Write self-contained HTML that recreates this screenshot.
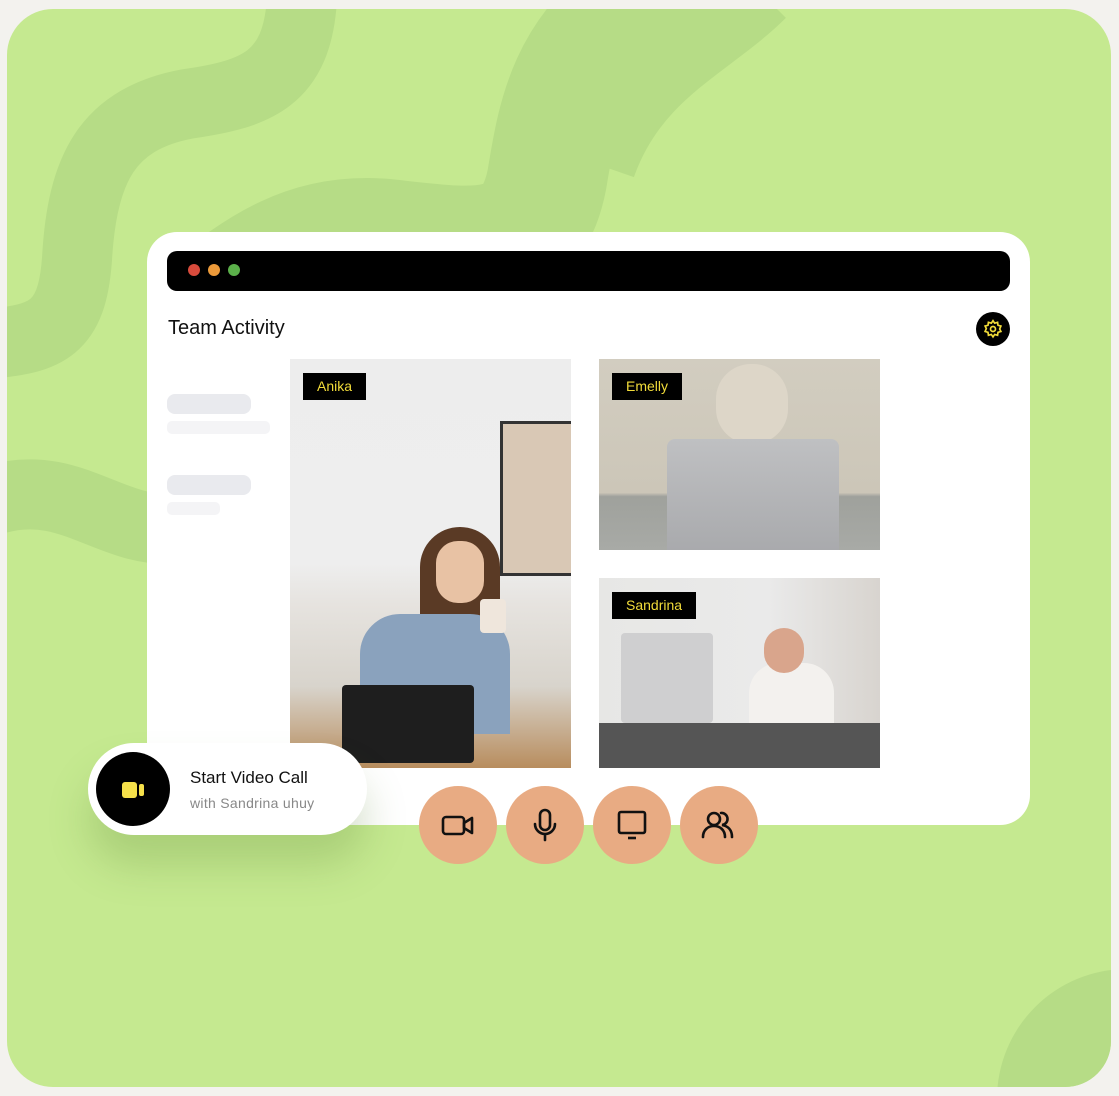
<!DOCTYPE html>
<html style="overflow:hidden"><head><style>
*{margin:0;padding:0;box-sizing:border-box}
html,body{width:1119px;height:1096px}
body{background:#f3f2ee;position:relative;overflow:hidden;font-family:"Liberation Sans",sans-serif}
.g{position:absolute;left:7px;top:9px;width:1104px;height:1078px;background:#c5e990;border-radius:46px;overflow:hidden}
.card{position:absolute;left:147px;top:232px;width:883px;height:593px;background:#fff;border-radius:30px}
.bar{position:absolute;left:167px;top:251px;width:843px;height:40px;background:#000;border-radius:10px}
.dot{position:absolute;top:264px;width:12px;height:12px;border-radius:50%}
.lbl{position:absolute;background:#000;color:#f2dc3a;font-size:14px;height:27px;line-height:27px;padding:0 14px}
.ph{position:absolute;overflow:hidden}
.sk{position:absolute;border-radius:8px}
.btn{position:absolute;top:786px;width:78px;height:78px;border-radius:50%;background:#e8ab83;display:flex;align-items:center;justify-content:center}
</style></head><body>
<div class="g">
<svg width="1104" height="1078" style="position:absolute;left:0;top:0">
<g fill="none" stroke="#b6dc86" stroke-linecap="butt">
<path d="M295,-10 C290,70 250,85 180,95 C100,110 75,160 70,250 C65,320 40,330 -20,335" stroke-width="70"/>
<path d="M640,-10 C560,40 550,110 540,170 C525,250 470,240 380,230 C300,222 250,260 200,300" stroke-width="120"/>
<path d="M740,-30 C690,20 610,50 575,150" stroke-width="110"/>
<path d="M-10,490 C60,470 100,520 160,520" stroke-width="70"/>
</g>
<circle cx="1120" cy="1090" r="130" fill="#b6dc86"/>
</svg>
</div>
<div class="card"></div>
<div class="bar"></div>
<div class="dot" style="left:188px;background:#d84b3c"></div>
<div class="dot" style="left:208px;background:#ec9a3a"></div>
<div class="dot" style="left:228px;background:#5bb04a"></div>
<div style="position:absolute;left:168px;top:317px;font-size:20px;color:#111">Team Activity</div>
<div style="position:absolute;left:976px;top:312px;width:34px;height:34px;border-radius:50%;background:#000;display:flex;align-items:center;justify-content:center">
<svg width="20" height="20" viewBox="0 0 24 24" fill="none" stroke="#f2dc3a" stroke-width="2"><circle cx="12" cy="12" r="3"/><path d="M12 2l2 3 3.5-1 .5 3.5 3.5 1-1.5 3.5 1.5 3-3.5 1-.5 3.5-3.5-1-2 3-2-3-3.5 1-.5-3.5-3.5-1 1.5-3.5L2.5 8.5 6 7.5 6.5 4 10 5z"/></svg></div>
<div class="sk" style="left:167px;top:394px;width:84px;height:20px;background:#e9eaee"></div>
<div class="sk" style="left:167px;top:421px;width:103px;height:13px;background:#f4f4f6;border-radius:5px"></div>
<div class="sk" style="left:167px;top:475px;width:84px;height:20px;background:#e9eaee"></div>
<div class="sk" style="left:167px;top:502px;width:53px;height:13px;background:#f4f4f6;border-radius:5px"></div>

<div class="ph" style="left:290px;top:359px;width:281px;height:409px;background:linear-gradient(#ededed 0%,#eeeeee 50%,#e6e3df 60%,#d8d4cc 80%,#b88d5e 100%)">
<div style="position:absolute;left:210px;top:62px;width:71px;height:155px;background:#d9c8b5;border:3px solid #333;border-right:none"></div>
<div style="position:absolute;left:130px;top:168px;width:80px;height:110px;border-radius:40px 40px 10px 10px;background:#5a3a25"></div>
<div style="position:absolute;left:146px;top:182px;width:48px;height:62px;border-radius:22px;background:#e8c2a4"></div>
<div style="position:absolute;left:70px;top:255px;width:150px;height:120px;border-radius:40px 40px 0 0;background:#8aa2bd"></div>
<div style="position:absolute;left:52px;top:326px;width:132px;height:78px;background:#1e1e1e;border-radius:4px"></div>
<div style="position:absolute;left:190px;top:240px;width:26px;height:34px;background:#efe6dc;border-radius:4px"></div>
</div>
<div class="lbl" style="left:303px;top:373px">Anika</div>

<div class="ph" style="left:599px;top:359px;width:281px;height:191px;background:linear-gradient(#d2cdc0 0%,#ccc6b8 70%,#9fa19c 72%,#a8aaa6 100%)">
<div style="position:absolute;left:117px;top:5px;width:72px;height:80px;border-radius:35px;background:#ddd6c8"></div>
<div style="position:absolute;left:68px;top:80px;width:172px;height:111px;background:linear-gradient(#bfc0c2,#a9aaad);border-radius:8px 8px 0 0"></div>
</div>
<div class="lbl" style="left:612px;top:373px">Emelly</div>

<div class="ph" style="left:599px;top:578px;width:281px;height:190px;background:linear-gradient(90deg,#e7e7e5 0%,#eaeaea 60%,#d8d4cf 100%)">
<div style="position:absolute;left:22px;top:55px;width:92px;height:90px;background:#cfcfd0;border-radius:4px"></div>
<div style="position:absolute;left:150px;top:85px;width:85px;height:80px;border-radius:30px 30px 0 0;background:#f3f1ee"></div>
<div style="position:absolute;left:165px;top:50px;width:40px;height:45px;border-radius:20px;background:#d9a58c"></div>
<div style="position:absolute;left:0;top:145px;width:281px;height:45px;background:#555"></div>
</div>
<div class="lbl" style="left:612px;top:592px">Sandrina</div>

<div style="position:absolute;left:88px;top:743px;width:279px;height:92px;background:#fff;border-radius:46px;box-shadow:0 30px 40px rgba(90,130,50,.25)"></div>
<div style="position:absolute;left:96px;top:752px;width:74px;height:74px;border-radius:50%;background:#000"></div>
<div style="position:absolute;left:122px;top:782px;width:15px;height:16px;background:#f5e04a;border-radius:3px"></div>
<div style="position:absolute;left:139px;top:784px;width:5px;height:12px;background:#f5e04a;border-radius:2px"></div>
<div style="position:absolute;left:190px;top:768px;font-size:17px;color:#111">Start Video Call</div>
<div style="position:absolute;left:190px;top:795px;font-size:14px;color:#888;letter-spacing:.3px">with Sandrina uhuy</div>

<div class="btn" style="left:419px"><svg width="40" height="40" viewBox="0 0 40 40" fill="none" stroke="#111" stroke-width="2.6" stroke-linejoin="round"><rect x="5" y="12" width="21" height="17" rx="3"/><path d="M26 18l8-5v15l-8-5z"/></svg></div>
<div class="btn" style="left:506px"><svg width="40" height="40" viewBox="0 0 40 40" fill="none" stroke="#111" stroke-width="2.6" stroke-linecap="round"><rect x="15" y="5" width="10" height="20" rx="5"/><path d="M10 19a10 10 0 0 0 20 0M20 29v6"/></svg></div>
<div class="btn" style="left:593px"><svg width="40" height="40" viewBox="0 0 40 40" fill="none" stroke="#111" stroke-width="2.6" stroke-linejoin="round"><rect x="7" y="7" width="26" height="21" rx="2"/><path d="M16 33h8"/></svg></div>
<div class="btn" style="left:680px"><svg width="40" height="40" viewBox="0 0 40 40" fill="none" stroke="#111" stroke-width="2.6" stroke-linecap="round"><circle cx="15" cy="14" r="6"/><path d="M4 32c0-7 5-11 11-11s11 4 11 11M22 8a6 6 0 0 1 1 12c6 1 10 5 10 12"/></svg></div>
</body></html>
